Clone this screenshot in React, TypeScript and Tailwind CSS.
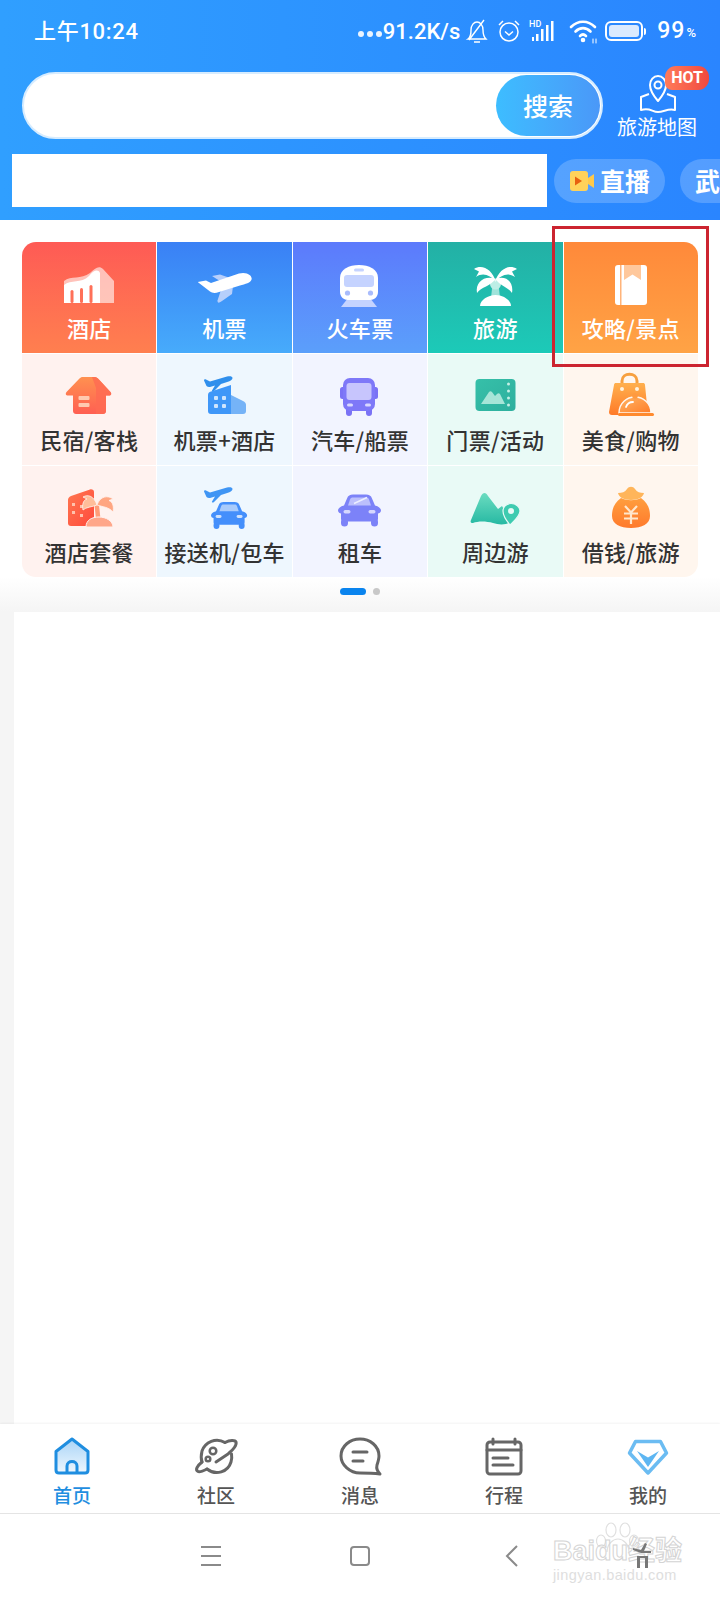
import React from "react";

// 60x60 service icons, drawn to sit in the middle of each grid cell
function HotelIcon() {
  return (
    <svg viewBox="0 0 60 60" className="w-[60px] h-[60px]">
      <path d="M5 49V27C12 21 22 26 31 19C36 14 40 11 44 15L55 27V49Z" fill="#fff" opacity=".6" />
      <path d="M5 49V31C12 25 22 30 30 22C35 16 39 15 41 19V49Z" fill="#fff" />
      <rect x="11.500" y="36" width="3" height="13" rx="1.500" fill="#ff7058" />
      <rect x="21" y="34" width="3" height="15" rx="1.500" fill="#ff7058" />
      <rect x="30.500" y="31" width="3" height="18" rx="1.500" fill="#ff7058" />
    </svg>
  );
}

function PlaneIcon() {
  return (
    <svg viewBox="0 0 60 60" className="w-[60px] h-[60px]">
      <path d="M17 22L25 20.500L38 25L28 29Z" fill="#b7cffb" />
      <path d="M26 36L38 32L37 40L27 47Q22 50.500 22.500 46.500Z" fill="#b7cffb" />
      <path d="M2.700 28L11 26.500L16 29L44 19.500C52 17.500 57 21.500 56.700 25C56 29 50 30 45 31.500L24 38C20 39.500 17 39 15 37.500Z" fill="#fff" />
    </svg>
  );
}

function TrainIcon() {
  return (
    <svg viewBox="0 0 60 60" className="w-[60px] h-[60px]">
      <path d="M18 44L11 53H47L40 44Z" fill="#c5d3ff" />
      <path d="M10 24C10 15 19 11 29 11C39 11 48 15 48 24V38C48 43 44 46 40 46H18C14 46 10 43 10 38Z" fill="#fff" />
      <rect x="14" y="21" width="30" height="12" rx="3" fill="#c5d3ff" />
      <rect x="24" y="14.500" width="10" height="3" rx="1.500" fill="#c5d3ff" />
      <circle cx="17.500" cy="39" r="2.600" fill="#a9bcfc" />
      <circle cx="40.500" cy="39" r="2.600" fill="#a9bcfc" />
    </svg>
  );
}

function PalmIcon() {
  return (
    <svg viewBox="0 0 60 60" className="w-[60px] h-[60px]">
      <path d="M27.500 30H33.500L35 44H26Z" fill="#9fe3da" />
      <circle cx="30.500" cy="30" r="5.500" fill="#bdeee6" />
      <path d="M31 28C27 15 17 10 9 15L14 17.500L11 23C18 18 25 21 31 28Z" fill="#fff" />
      <path d="M30 28C34 15 44 10 52 15L47 17.500L50 23C43 18 36 21 30 28Z" fill="#fff" />
      <path d="M30.500 25C20 21 10 28 12 39C16 33 26 32 30.500 25Z" fill="#fff" />
      <path d="M30.500 25C41 21 49 28 47 39C43 33 35 32 30.500 25Z" fill="#fff" />
      <path d="M15 52C15 46 23 41 30.500 41C38 41 46 46 46 52Z" fill="#fff" />
    </svg>
  );
}

function BookIcon() {
  return (
    <svg viewBox="0 0 60 60" className="w-[60px] h-[60px]">
      <rect x="14" y="11" width="32" height="40" rx="3" fill="#fff" />
      <rect x="19" y="11" width="1.500" height="40" fill="#ffb47a" />
      <path d="M23 11H40V26L31.500 20.500L23 26Z" fill="#ffc89c" />
    </svg>
  );
}

function HouseIcon() {
  return (
    <svg viewBox="0 0 60 60" className="w-[60px] h-[60px]">
      <defs>
        <linearGradient id="house" x1="0" y1="0" x2="0" y2="1">
          <stop offset="0" stopColor="#ff9150" />
          <stop offset="1" stopColor="#ff5f52" />
        </linearGradient>
      </defs>
      <path d="M23 11H36C37.500 11 38.500 12 39.500 13L51.500 26C53 28 52 29.500 50 29.500H47V45C47 47 45.500 48 44 48H17C15.500 48 14 47 14 45V29.500H9C7 29.500 6 28 7.500 26L20 13C21 12 22 11 23 11Z" fill="url(#house)" />
      <path d="M33 11H36C37.500 11 38.500 12 39.500 13L51.500 26C53 28 52 29.500 50 29.500H47V45C47 47 45.500 48 44 48H37V22Z" fill="#ff6a52" opacity=".8" />
      <rect x="19.500" y="30" width="11" height="4" rx="1" fill="#ffc9b0" />
      <rect x="19.500" y="37" width="11" height="4" rx="1" fill="#ffc9b0" />
    </svg>
  );
}

function PlaneSmall({ fill }: { fill: string }) {
  return (
    <path
      d="M9 14.500C9 13.500 10 13 11 13.500L15 15.500L32 10.500C35 9.800 37.500 10.300 37.500 12C37.500 13.500 36 14.800 33 15.800L26 18L19 25C18 26 16.500 25.500 17 24.500L20 19.500L15 21C13.500 21.300 12.500 20.800 11.500 20Z"
      fill={fill}
    />
  );
}

function PlaneHotelIcon() {
  return (
    <svg viewBox="0 0 60 60" className="w-[60px] h-[60px]">
      <PlaneSmall fill="#2f8fec" />
      <path d="M13 29C13 27 14 26 16 25.500L36 19V48H16C14 48 13 47 13 45Z" fill="#3f97f8" />
      <path d="M36 29L48 35C50 36 51 37 51 39V45C51 47 50 48 48 48H36Z" fill="#75b3f7" />
      <rect x="19" y="30" width="4" height="4" rx="1" fill="#cfe5fd" />
      <rect x="27" y="30" width="4" height="4" rx="1" fill="#cfe5fd" />
      <rect x="19" y="38" width="4" height="4" rx="1" fill="#cfe5fd" />
      <rect x="27" y="38" width="4" height="4" rx="1" fill="#cfe5fd" />
    </svg>
  );
}

function BusIcon() {
  return (
    <svg viewBox="0 0 60 60" className="w-[60px] h-[60px]">
      <rect x="10" y="21" width="6" height="12" rx="2.500" fill="#7a72f5" />
      <rect x="42" y="21" width="6" height="12" rx="2.500" fill="#7a72f5" />
      <rect x="16" y="40" width="6" height="10" rx="3" fill="#7a72f5" />
      <rect x="36" y="40" width="6" height="10" rx="3" fill="#7a72f5" />
      <rect x="13" y="12" width="32" height="33" rx="7" fill="#7e78f8" />
      <rect x="16.500" y="17" width="25" height="17" rx="3" fill="#c7c5fd" />
      <rect x="17" y="37.500" width="6" height="3" rx="1.500" fill="#d9d8ff" />
      <rect x="35" y="37.500" width="6" height="3" rx="1.500" fill="#d9d8ff" />
    </svg>
  );
}

function TicketIcon() {
  return (
    <svg viewBox="0 0 60 60" className="w-[60px] h-[60px]">
      <defs>
        <linearGradient id="ticket" x1="0" y1="0" x2="1" y2="1">
          <stop offset="0" stopColor="#36c0a9" />
          <stop offset="1" stopColor="#2eaf9e" />
        </linearGradient>
      </defs>
      <rect x="10.500" y="13" width="40" height="32" rx="4" fill="url(#ticket)" />
      <path d="M16 38L24 26C25 25 26 25 27 26L30 30L32 28C33 27 34 27 35 28L40 38Z" fill="#a7e5d8" />
      <circle cx="43.500" cy="18" r="1.500" fill="#c5f0e6" />
      <circle cx="43.500" cy="25" r="1.500" fill="#c5f0e6" />
      <circle cx="43.500" cy="32" r="1.500" fill="#c5f0e6" />
      <circle cx="43.500" cy="39" r="1.500" fill="#c5f0e6" />
    </svg>
  );
}

function BagIcon() {
  return (
    <svg viewBox="0 0 60 60" className="w-[60px] h-[60px]">
      <defs>
        <linearGradient id="bag" x1="0" y1="0" x2="0" y2="1">
          <stop offset="0" stopColor="#ffb04e" />
          <stop offset="1" stopColor="#ff7a28" />
        </linearGradient>
        <linearGradient id="cloche" x1="0" y1="0" x2="1" y2="1">
          <stop offset="0" stopColor="#ffb565" />
          <stop offset="1" stopColor="#ff7d28" />
        </linearGradient>
      </defs>
      <path d="M21 20V15C21 6 36 6 36 15V20" fill="none" stroke="#f7a03f" strokeWidth="3" />
      <path d="M13 19C13 17.500 14 17 15 17H42C43 17 44 17.500 44 19L47 49H11C9 49 8 48 8 46Z" fill="url(#bag)" />
      <circle cx="21" cy="23" r="2" fill="#fff3dd" />
      <circle cx="36" cy="23" r="2" fill="#fff3dd" />
      <path d="M18 47C18 37 26 31 34 31C42 31 50 37 50 47Z" fill="url(#cloche)" stroke="#fff6ee" strokeWidth="1.500" />
      <circle cx="34" cy="30" r="2.800" fill="#ff9a40" />
      <path d="M25 41C26 38 29 36 32 36" fill="none" stroke="#fff" strokeWidth="1.800" strokeLinecap="round" />
      <rect x="17" y="47" width="36" height="3" rx="1.500" fill="#ff8a2e" />
    </svg>
  );
}

function ResortIcon() {
  return (
    <svg viewBox="0 0 60 60" className="w-[60px] h-[60px]">
      <defs>
        <linearGradient id="resort" x1="0" y1="0" x2="1" y2="1">
          <stop offset="0" stopColor="#ff7750" />
          <stop offset="1" stopColor="#ff4a3c" />
        </linearGradient>
      </defs>
      <path d="M9 22C9 20 10 19 12 18L31 11.500C33 11 35 12 35 14V48H12C10 48 9 47 9 45Z" fill="url(#resort)" />
      <rect x="13" y="25" width="3" height="3" fill="#ffc2ad" />
      <rect x="21" y="27" width="3" height="3" fill="#ffc2ad" />
      <rect x="13" y="33" width="3" height="3" fill="#ffc2ad" />
      <rect x="21" y="36" width="3" height="3" fill="#ffc2ad" />
      <path d="M37 41L35.500 27H40L41.500 41Z" fill="#ff9d78" />
      <path d="M38 27C35 18 29 16 24 19L28 21C24 22 23 27 24 32C27 29 33 29 38 27Z" fill="#ffbe9a" stroke="#fff2ef" strokeWidth=".8" />
      <path d="M38 27C41 18 49 17 54 21L50 22.500C54 24 55 29 54 34C50 29 44 29 38 27Z" fill="#ffa682" stroke="#fff2ef" strokeWidth=".8" />
      <path d="M27 49C27 42 33 39 40 39C47 39 54 43 54 49Z" fill="#ffa78a" stroke="#fff2ef" strokeWidth="1" />
    </svg>
  );
}

function CarBody({ body, glass, light }: { body: string; glass: string; light: string }) {
  return (
    <g>
      <rect x="11" y="42" width="7" height="8" rx="3.500" fill={body} />
      <rect x="41" y="42" width="7" height="8" rx="3.500" fill={body} />
      <path d="M17 22C18 19 20 18 23 18H36C39 18 41 19 42 22L45 29C49 30 51 32 51 34C51 36 49 37 48 37V42C48 44 47 45 45 45H14C12 45 11 44 11 42V37C10 37 8 36 8 34C8 32 10 30 14 29Z" fill={body} />
      <path d="M20 23C20.500 21.500 21.500 21 23 21H36C37.500 21 38.500 21.500 39 23L41 29H18Z" fill={glass} />
      <rect x="13.500" y="33.500" width="7" height="3.500" rx="1.700" fill={light} />
      <rect x="38.500" y="33.500" width="7" height="3.500" rx="1.700" fill={light} />
    </g>
  );
}

function TransferIcon() {
  return (
    <svg viewBox="0 0 60 60" className="w-[60px] h-[60px]">
      <g transform="translate(0 -1)">
        <PlaneSmall fill="#3f95f4" />
      </g>
      <g transform="translate(9.300 8.900) scale(.84)">
        <CarBody body="#448ffb" glass="#a9cbfb" light="#cfe2fd" />
      </g>
    </svg>
  );
}

function RentalIcon() {
  return (
    <svg viewBox="0 0 60 60" className="w-[60px] h-[60px]">
      <g transform="translate(0 -1.500)">
        <CarBody body="#7c82f8" glass="#bcbffc" light="#d5d7fe" />
        <path d="M24 27L37 21" stroke="#eceeff" strokeWidth="1.500" />
      </g>
    </svg>
  );
}

function MountainIcon() {
  return (
    <svg viewBox="0 0 60 60" className="w-[60px] h-[60px]">
      <defs>
        <linearGradient id="mountain" x1="0" y1="0" x2="0" y2="1">
          <stop offset="0" stopColor="#6bdcc0" />
          <stop offset="1" stopColor="#27b9a3" />
        </linearGradient>
      </defs>
      <path d="M6 42L16 18C18 14 21 14 23 18L33 31L37 28L46 44C41 47 34 47 28 45C21 43 13 43 8 45C6 45 5 44 6 42Z" fill="url(#mountain)" />
      <path d="M45 47C40 41 38 37 38 33C38 29 41 25.500 46 25.500C51 25.500 55 29 55 33C55 38 50 42 45 47Z" fill="#3ecbb0" stroke="#e9faf6" strokeWidth="1.200" />
      <circle cx="46" cy="33" r="3" fill="#e9faf6" />
    </svg>
  );
}

function MoneyIcon() {
  return (
    <svg viewBox="0 0 60 60" className="w-[60px] h-[60px]">
      <defs>
        <linearGradient id="money" x1="0" y1="0" x2="0" y2="1">
          <stop offset="0" stopColor="#ff9e3e" />
          <stop offset="1" stopColor="#ff7a2c" />
        </linearGradient>
      </defs>
      <path d="M17 15C21 15 24 14 26 11C28 8 32 8 34 11C36 14 39 15 43 15C42 19 38 22 30 22C22 22 18 19 17 15Z" fill="#ffb55a" />
      <path d="M20 20C13 25 11 31 11 38C11 46 19 50 30 50C41 50 49 46 49 38C49 31 47 25 40 20C34 23 26 23 20 20Z" fill="url(#money)" />
      <path d="M24 28L30 34.500L36 28M23 35.500H37M23 40.500H37M30 34.500V46" fill="none" stroke="#ffe7cc" strokeWidth="2.200" />
    </svg>
  );
}

const topItems = [
  { label: "酒店", bg: "bg-gradient-to-b from-[#fe5a55] to-[#ff7f4f] rounded-tl-[14px]", icon: <HotelIcon /> },
  { label: "机票", bg: "bg-gradient-to-b from-[#3a80f5] to-[#47abfb]", icon: <PlaneIcon /> },
  { label: "火车票", bg: "bg-gradient-to-b from-[#5c7afc] to-[#5b9ffb]", icon: <TrainIcon /> },
  { label: "旅游", bg: "bg-gradient-to-b from-[#23b0a5] to-[#1ccab8]", icon: <PalmIcon /> },
  { label: "攻略/景点", bg: "bg-gradient-to-b from-[#ff893a] to-[#ffa345] rounded-tr-[14px]", icon: <BookIcon /> },
];

const subItems = [
  { label: "民宿/客栈", bg: "bg-[#fff2ef]", icon: <HouseIcon /> },
  { label: "机票+酒店", bg: "bg-[#eef7fe]", icon: <PlaneHotelIcon /> },
  { label: "汽车/船票", bg: "bg-[#f2f4ff]", icon: <BusIcon /> },
  { label: "门票/活动", bg: "bg-[#e9faf6]", icon: <TicketIcon /> },
  { label: "美食/购物", bg: "bg-[#fff6ee]", icon: <BagIcon /> },
  { label: "酒店套餐", bg: "bg-[#fff2ef] rounded-bl-[14px]", icon: <ResortIcon /> },
  { label: "接送机/包车", bg: "bg-[#eef7fe]", icon: <TransferIcon /> },
  { label: "租车", bg: "bg-[#f2f4ff]", icon: <RentalIcon /> },
  { label: "周边游", bg: "bg-[#e9faf6]", icon: <MountainIcon /> },
  { label: "借钱/旅游", bg: "bg-[#fff6ee] rounded-br-[14px]", icon: <MoneyIcon /> },
];

function StatusBar() {
  return (
    <div className="h-[72px] pb-[10px] pl-[34px] pr-[24px] flex items-center justify-between text-white font-['Roboto','Noto_Sans_CJK_SC',sans-serif]">
      <span className="text-[22px] font-medium tracking-[0.7px]">上午10:24</span>
      <div className="flex items-center">
        <div className="flex gap-[3px] mr-[1px] mt-[6px]">
          <span className="w-[6px] h-[6px] rounded-full bg-white/90" />
          <span className="w-[6px] h-[6px] rounded-full bg-white/90" />
          <span className="w-[6px] h-[6px] rounded-full bg-white/90" />
        </div>
        <span className="text-[22px] font-medium">91.2K/s</span>
        <svg viewBox="0 0 24 26" className="w-[24px] h-[26px] ml-[5px]" fill="none" stroke="#fff" strokeWidth="1.400">
          <path d="M3 21C6 19 6 16 6 12C6 7 9 4 12 4C15 4 18 7 18 12C18 16 19 19 21 21Z" />
          <path d="M9 24H15M4 22L19 2" />
        </svg>
        <svg viewBox="0 0 26 26" className="w-[26px] h-[26px] ml-[7px]" fill="none" stroke="#fff" strokeWidth="1.500">
          <circle cx="13" cy="14" r="9" />
          <path d="M9 13.500L13 17L17 13.500M3 7L7 3M23 7L19 3" />
        </svg>
        <svg viewBox="0 0 28 26" className="w-[28px] h-[26px] ml-[7px]" fill="#fff">
          <rect x="3" y="19" width="2" height="4" />
          <rect x="7" y="16" width="2.500" height="7" />
          <rect x="12" y="11" width="2.500" height="12" />
          <rect x="17" y="7" width="2.500" height="16" />
          <rect x="22" y="3" width="2.500" height="20" />
          <text x="0" y="9" fontSize="9" fontFamily="Roboto" fontWeight="500">HD</text>
        </svg>
        <svg viewBox="0 0 30 26" className="w-[30px] h-[26px] ml-[12px]" fill="none" stroke="#fff" strokeWidth="2.600" strokeLinecap="round">
          <path d="M2 9C9 2 19 2 26 9" />
          <path d="M6.500 13.500C11 9 17 9 21.500 13.500" />
          <path d="M11 18C13 16 15 16 17 18" />
          <circle cx="14" cy="22" r="1" fill="#fff" />
          <path d="M24 21V25M27 21V25" strokeWidth="1" />
        </svg>
        <div className="ml-[6px] flex items-center">
          <div className="w-[38px] h-[20px] rounded-[6px] border-2 border-white p-[2px]">
            <div className="w-full h-full rounded-[3px] bg-[#dbeafe]" />
          </div>
          <div className="w-[2px] h-[7px] ml-[1px] bg-white rounded-r-full" />
        </div>
        <span className="ml-[11px] text-[23px] tracking-[1px] font-medium">99</span>
        <span className="ml-[1px] text-[13px] font-medium mt-[3px]">%</span>
      </div>
    </div>
  );
}

function Header() {
  return (
    <header className="h-[220px] shrink-0 bg-gradient-to-r from-[#309fff] to-[#2a85ff]">
      <StatusBar />
      <div className="h-[67px] pl-[22px] flex items-center">
        <div className="w-[581px] h-[67px] rounded-full bg-white border-2 border-[#d6ecff] flex justify-end p-[1px]">
          <button className="w-[104px] rounded-full bg-gradient-to-r from-[#3dbdff] to-[#4a98f8] text-white text-[25px] font-medium">
            搜索
          </button>
        </div>
        <div className="relative w-[100px] ml-[4px] h-[72px] flex flex-col items-center text-white">
          <svg viewBox="0 0 40 40" className="w-[40px] h-[40px] mt-[3px] ml-[2px]" fill="none" stroke="#fff" strokeWidth="2" strokeLinejoin="round">
            <path d="M20 28C14 21 12 17 12 12C12 7 15.500 3 20 3C24.500 3 28 7 28 12C28 17 26 21 20 28Z" />
            <circle cx="20" cy="12" r="3.500" />
            <path d="M11 21L3 24V37C12 34 14 39 20 39C26 39 30 35 37 37V24L29 21" />
          </svg>
          <span className="text-[20px] leading-[26px] mt-[1px] whitespace-nowrap">旅游地图</span>
          <span className="absolute left-[58px] top-[-4px] w-[44px] h-[24px] rounded-t-[11px] rounded-br-[11px] rounded-bl-[7px] bg-gradient-to-r from-[#ff7a5a] to-[#f0483f] text-white text-[16px] font-bold leading-[24px] text-center font-['Roboto']">
            HOT
          </span>
        </div>
      </div>
      <div className="mt-[15px] pl-[12px] h-[53px] flex items-center overflow-hidden">
        <div className="w-[535px] h-[53px] bg-white shrink-0" />
        <div className="ml-[7px] w-[111px] h-[44px] rounded-full bg-white/20 flex items-center justify-center gap-[5px] shrink-0">
          <svg viewBox="0 0 26 24" className="w-[26px] h-[24px]">
            <path d="M1 5C1 3 2 2 4 2H16C18 2 19 3 19 5V19C19 21 18 22 16 22H4C2 22 1 21 1 19Z" fill="#ffd25a" />
            <path d="M19 9L25 5V19L19 15Z" fill="#ffc94a" />
            <path d="M6 7.500L13 12L6 16.500Z" fill="#e8600f" />
          </svg>
          <span className="text-white text-[25px] leading-[34px] -mt-[2px] font-bold">直播</span>
        </div>
        <div className="ml-[15px] h-[44px] w-[40px] pl-[15px] rounded-l-full bg-white/20 flex items-center shrink-0">
          <span className="text-white text-[25px] leading-[34px] -mt-[2px] font-bold">武</span>
        </div>
      </div>
    </header>
  );
}

function ServiceGrid() {
  return (
    <section className="relative px-[22px] pt-[22px]">
      <div className="grid grid-cols-5 gap-px">
        {topItems.map((item) => (
          <div key={item.label} className={`${item.bg} h-[111px] pt-[12px] flex flex-col items-center`}>
            {item.icon}
            <span className="text-white text-[22px] leading-[30px] -mt-[2px] tracking-[0.3px] font-medium">{item.label}</span>
          </div>
        ))}
        {subItems.map((item) => (
          <div key={item.label} className={`${item.bg} h-[111px] pt-[12px] flex flex-col items-center`}>
            {item.icon}
            <span className="text-[#333] text-[22px] leading-[30px] -mt-[2px] tracking-[0.3px] font-medium whitespace-nowrap">{item.label}</span>
          </div>
        ))}
      </div>
      {/* red annotation box on top of the last column */}
      <div className="absolute left-[552px] top-[6px] w-[157px] h-[141px] border-[3px] border-[#cc2430]" />
    </section>
  );
}

function TabBar() {
  return (
    <div className="h-[90px] shrink-0 bg-white border-b border-[#e4e4e4] grid grid-cols-5 shadow-[0_-1px_2px_rgba(0,0,0,0.05)]">
      <div className="flex flex-col items-center pt-[8px]">
        <svg viewBox="0 0 48 48" className="w-[48px] h-[48px]">
          <defs>
            <linearGradient id="homeFill" x1="0" y1="0" x2="0" y2="1">
              <stop offset="0" stopColor="#a9d4f7" />
              <stop offset="1" stopColor="#eef7fe" />
            </linearGradient>
          </defs>
          <path d="M8 19.500L24 7L40 19.500V38C40 40 39 41 37 41H11C9 41 8 40 8 38Z" fill="url(#homeFill)" stroke="#1f8ee0" strokeWidth="3" strokeLinejoin="round" />
          <path d="M19 41V34C19 28 29 28 29 34V41" fill="none" stroke="#1f8ee0" strokeWidth="3" />
        </svg>
        <span className="text-[19px] leading-[26px] mt-[2px] font-medium text-[#1f8ee0]">首页</span>
      </div>
      <div className="flex flex-col items-center pt-[8px]">
        <svg viewBox="0 0 48 48" className="w-[48px] h-[48px]" fill="none" stroke="#666" strokeWidth="3" strokeLinecap="round">
          <path d="M33 10.500C24 5 13 10 10 19C9 23 9 27 10 30" />
          <path d="M10 30C5 34 3 38 6 39.500C8 40.500 11 39 15 37" />
          <path d="M15 37C24 44 36 40 39 30C40 27 40 25 39.500 22" />
          <path d="M33 10.500C38 8 43 8 44 10C45 13 41 18 37 21" />
          <path d="M36 22L24 30" />
          <circle cx="21" cy="19" r="3.300" strokeWidth="2.500" />
          <circle cx="16" cy="27" r="2.300" strokeWidth="2.500" />
        </svg>
        <span className="text-[19px] leading-[26px] mt-[2px] font-medium text-[#555]">社区</span>
      </div>
      <div className="flex flex-col items-center pt-[8px]">
        <svg viewBox="0 0 48 48" className="w-[48px] h-[48px]" fill="none" stroke="#666" strokeWidth="3" strokeLinecap="round" strokeLinejoin="round">
          <path d="M24 7C14 7 5 14 5 24C5 33 14 41 24 41C30 41 36 41 44 42C41 39 40 37 41 33C42 30 43 27 43 24C43 14 34 7 24 7Z" />
          <path d="M17 20H31M17 29H27" />
        </svg>
        <span className="text-[19px] leading-[26px] mt-[2px] font-medium text-[#555]">消息</span>
      </div>
      <div className="flex flex-col items-center pt-[8px]">
        <svg viewBox="0 0 48 48" className="w-[48px] h-[48px]" fill="none" stroke="#666" strokeWidth="3" strokeLinecap="round" strokeLinejoin="round">
          <rect x="7" y="10" width="34" height="32" rx="3" />
          <path d="M13 7V12M35 7V12M7 18H41M13 26H28M13 33H33" />
        </svg>
        <span className="text-[19px] leading-[26px] mt-[2px] font-medium text-[#555]">行程</span>
      </div>
      <div className="flex flex-col items-center pt-[8px]">
        <svg viewBox="0 0 48 48" className="w-[48px] h-[48px]">
          <path d="M11.500 9.500H36.500L42.500 21L24 41L5.500 21Z" fill="none" stroke="#6bbcf2" strokeWidth="3.500" strokeLinejoin="round" />
          <path d="M13 19L24 25.500L35 19L24 35Z" fill="#5db6f2" />
        </svg>
        <span className="text-[19px] leading-[26px] mt-[2px] font-medium text-[#555]">我的</span>
      </div>
    </div>
  );
}

function NavBar() {
  return (
    <div className="relative flex-1 bg-white flex items-center pb-[2px]">
      <div className="w-[139px]" />
      <div className="w-[144px] flex justify-center">
        <svg viewBox="0 0 24 24" className="w-[24px] h-[24px]" stroke="#8a8a8a" strokeWidth="2">
          <path d="M2 3H22M2 12H22M2 21H22" />
        </svg>
      </div>
      <div className="w-[154px] flex justify-center">
        <div className="w-[20px] h-[20px] rounded-[4px] border-2 border-[#8a8a8a]" />
      </div>
      <div className="w-[150px] flex justify-center">
        <svg viewBox="0 0 16 24" className="w-[16px] h-[24px]" fill="none" stroke="#8a8a8a" strokeWidth="2">
          <path d="M13 2L3 12L13 22" />
        </svg>
      </div>
      {/* Baidu watermark sits over the nav bar */}
      <div className="absolute left-[553px] top-[8px] w-[130px] h-[66px] pt-[14px] font-['Liberation_Sans','Noto_Sans_CJK_SC',sans-serif]">
        <svg viewBox="0 0 44 30" className="absolute left-[42px] top-0 w-[44px] h-[30px]" fill="#fff" stroke="#e0e0e0" strokeWidth="1.200">
          <ellipse cx="6" cy="19" rx="4.500" ry="6" />
          <ellipse cx="16" cy="8" rx="5" ry="7" />
          <ellipse cx="30" cy="8" rx="5" ry="7" />
          <ellipse cx="39" cy="19" rx="4.500" ry="6" />
          <path d="M12 30C12 22 18 17 23 17C28 17 34 22 34 30" />
        </svg>
        <div className="relative text-[27px] leading-[30px] font-bold text-transparent [-webkit-text-stroke:1px_#d4d4d4] whitespace-nowrap">Baidu经验</div>
        <div className="relative text-[14.500px] leading-[18px] text-[#dedede] tracking-[0.4px] whitespace-nowrap">jingyan.baidu.com</div>
      </div>
      <svg viewBox="0 0 18 26" className="absolute left-[633px] top-[28px] w-[18px] h-[26px]" fill="#777">
        <path d="M0 6L8 8L12 1L14 2L11 9L18 9V11H8L0 8Z" />
        <rect x="4" y="14" width="11" height="2" />
        <rect x="4" y="16" width="3" height="10" />
        <rect x="12" y="16" width="3" height="10" />
      </svg>
    </div>
  );
}

export default function App() {
  return (
    <div className="w-[720px] h-[1600px] overflow-hidden bg-white flex flex-col font-['Noto_Sans_CJK_SC','Roboto',sans-serif]">
      <Header />
      <ServiceGrid />
      <div className="h-[35px] shrink-0 bg-gradient-to-b from-white to-[#f5f5f5] flex justify-center pt-[11px] gap-[3px]">
        <span className="w-[26px] h-[7px] rounded-full bg-[#0a84ee]" />
        <span className="w-[7px] h-[7px] rounded-full bg-[#c8c8c8] ml-[4px]" />
      </div>
      <div className="flex-1 flex">
        <div className="w-[14px] bg-[#f5f5f5]" />
        <div className="flex-1 bg-white" />
      </div>
      <TabBar />
      <div className="h-[86px] shrink-0 flex">
        <NavBar />
      </div>
    </div>
  );
}
